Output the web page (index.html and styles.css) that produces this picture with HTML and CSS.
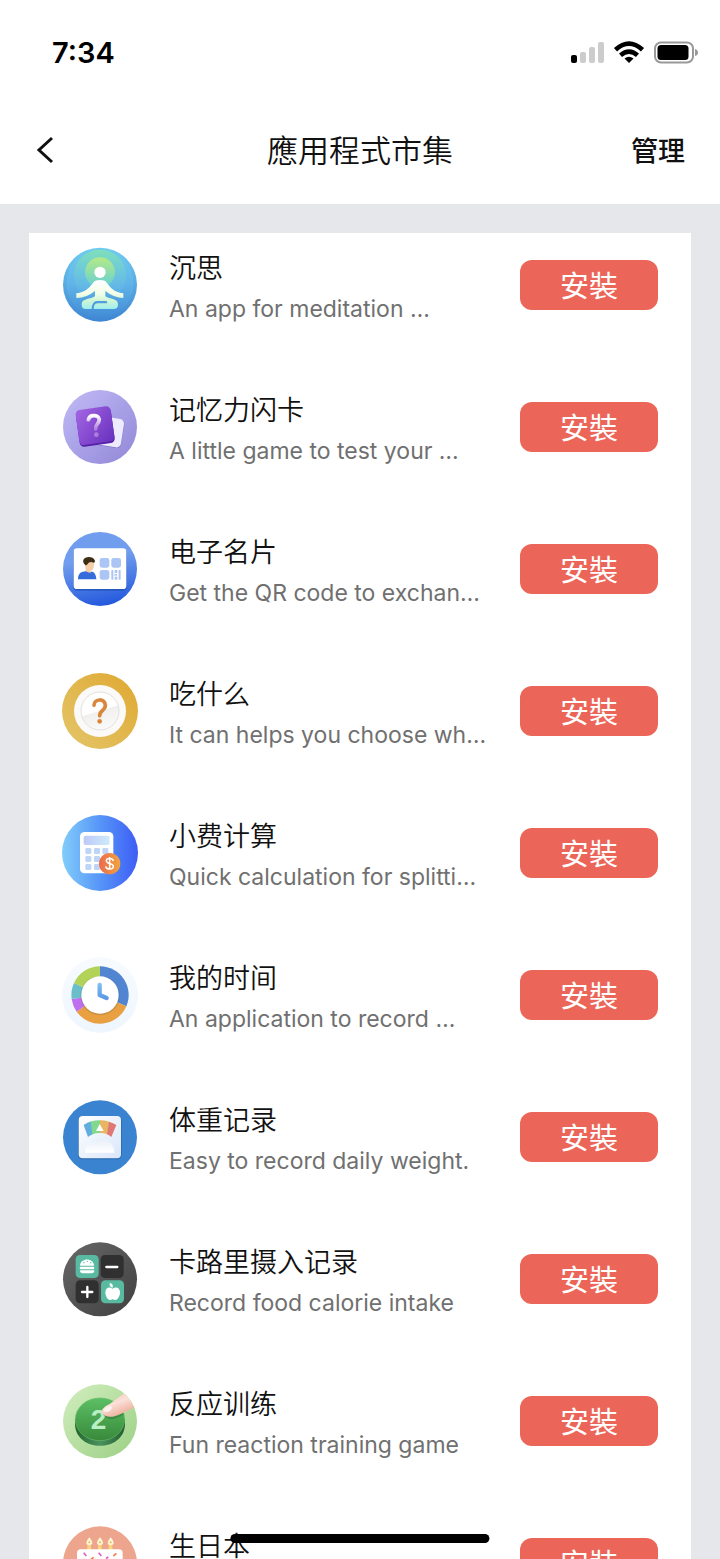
FILE: index.html
```html
<!DOCTYPE html>
<html lang="zh-Hant">
<head>
<meta charset="utf-8">
<meta name="viewport" content="width=device-width, initial-scale=1">
<title>應用程式市集</title>
<link rel="stylesheet" href="styles.css">
</head>
<body>
<div class="screen">
  <div class="status">
    <span class="time">7:34</span>
    <svg class="status-icons" width="128" height="24" viewBox="0 0 128 24" aria-hidden="true">
      <rect x="1" y="15" width="6" height="8" rx="2"/>
      <g fill="#ccc"><rect x="10" y="12" width="6" height="11" rx="2"/><rect x="19" y="7" width="6" height="16" rx="2"/><rect x="28" y="2" width="6" height="21" rx="2"/></g>
      <g fill="none" stroke="#000" stroke-width="4.600"><path d="M45.500 9.800Q59 -2.500 72.500 9.800"/><path d="M50.500 15.300Q59 8 67.500 15.300"/></g>
      <path d="M54.500 18.500Q59 15 63.500 18.500L59 23Z"/>
      <rect x="85" y="2.500" width="38" height="20" rx="6" fill="none" stroke="#999" stroke-width="2"/>
      <rect x="87.500" y="5" width="31" height="15" rx="3.500"/>
      <path d="M125 9Q128 10 128 12.500Q128 15 125 16Z" fill="#999"/>
    </svg>
  </div>
  <header class="navbar">
    <button class="back" type="button" aria-label="返回"><svg width="20" height="28" viewBox="0 0 20 28" aria-hidden="true"><path d="M17 2L4 14L17 26" fill="none" stroke="#111" stroke-width="3"/></svg></button>
    <h1 class="heading">應用程式市集</h1>
    <button class="manage" type="button">管理</button>
  </header>
  <main class="content">
    <ul class="apps">
      <li class="app">
        <svg class="icon" viewBox="36 36 228 228" aria-hidden="true">
          <defs>
            <linearGradient id="m1" x2="0" y2="1"><stop stop-color="#6fcdf0"/><stop offset="1" stop-color="#3f86d3"/></linearGradient>
            <linearGradient id="m0" x2="0" y2="1"><stop stop-color="#72cdf0"/><stop offset=".5" stop-color="#60b4e8"/><stop offset="1" stop-color="#438cd6"/></linearGradient>
            <linearGradient id="m2" x2="0" y2="1"><stop stop-color="#7fe0b8"/><stop offset=".75" stop-color="#64bfe6" stop-opacity=".4"/><stop offset="1" stop-color="#5aaee4" stop-opacity="0"/></linearGradient>
            <linearGradient id="m3" x2="0" y2="1"><stop stop-color="#b5ea86"/><stop offset="1" stop-color="#64cfd5"/></linearGradient>
            <linearGradient id="m4" gradientUnits="userSpaceOnUse" x1="0" y1="138" x2="0" y2="222"><stop stop-color="#fff"/><stop offset=".45" stop-color="#f3fde6"/><stop offset=".7" stop-color="#cff6d5"/><stop offset="1" stop-color="#9eeeee"/></linearGradient>
          </defs>
          <circle cx="150" cy="149" r="111" fill="url(#m1)"/>
          <circle cx="150" cy="146" r="101" fill="url(#m0)"/>
          <circle cx="150" cy="122" r="78" fill="url(#m2)"/>
          <circle cx="150" cy="112" r="45" fill="url(#m3)"/>
          <circle cx="150" cy="112" r="17" fill="#fff"/>
          <path d="M134 138Q150 132 166 138C183 159 190 171 220 175V189Q193 189 166 168V184C185 195 204 190 204 209Q204 222 190 222H131Q131 206 142 205H171Q173 201 169 198H141Q126 199 125 222H107Q95 222 95 209C95 190 116 195 135 184V168Q107 190 79 189V175C109 171 116 159 134 138Z" fill="url(#m4)"/>
        </svg>
        <div class="info"><h2 class="name" lang="zh-Hans">沉思</h2><p class="desc" lang="en">An app for meditation …</p></div>
        <button class="install" type="button">安裝</button>
      </li>
      <li class="app">
        <svg class="icon" viewBox="36 462 228 228" aria-hidden="true">
          <defs>
            <linearGradient id="f1" x2="1" y2="1"><stop stop-color="#c1bbf6"/><stop offset="1" stop-color="#9187d8"/></linearGradient>
            <linearGradient id="f2" x2="1" y2="1"><stop stop-color="#a465e3"/><stop offset="1" stop-color="#6730bd"/></linearGradient>
            <linearGradient id="f3" x2="0" y2="1"><stop stop-color="#fff"/><stop offset="1" stop-color="#ae80dc"/></linearGradient>
          </defs>
          <circle cx="150" cy="576" r="111" fill="url(#f1)"/>
          <rect x="133" y="549" width="86" height="86" rx="14" fill="#8073c4" transform="rotate(9 176 592)"/>
          <rect x="132" y="547" width="86" height="86" rx="14" fill="#eeebff" transform="rotate(9 175 590)"/>
          <rect x="83" y="524" width="106" height="106" rx="13" fill="#5521a5" transform="rotate(-8 136 577)"/>
          <rect x="82" y="519" width="106" height="106" rx="13" fill="url(#f2)" transform="rotate(-8 135 572)"/>
          <path d="M115 554Q119 540 134 542Q150 544 147 558C145 568 135 569 137 582" fill="none" stroke="url(#f3)" stroke-width="11" stroke-linecap="round"/>
          <circle cx="139" cy="599" r="7" fill="#a980dc"/>
        </svg>
        <div class="info"><h2 class="name" lang="zh-Hans">记忆力闪卡</h2><p class="desc" lang="en">A little game to test your …</p></div>
        <button class="install" type="button">安裝</button>
      </li>
      <li class="app">
        <svg class="icon" viewBox="36 33 228 228" aria-hidden="true">
          <defs><linearGradient id="c1" x1=".4" x2=".6" y2="1"><stop offset=".35" stop-color="#709ded"/><stop offset="1" stop-color="#2257dc"/></linearGradient></defs>
          <circle cx="150" cy="147" r="111" fill="url(#c1)"/>
          <rect x="70" y="88" width="160" height="124" rx="11" fill="#1d4fae" opacity=".65"/>
          <rect x="71" y="85" width="158" height="122" rx="10" fill="#fff"/>
          <path d="M84 178C84 159 94 155 108 154L128 155Q138 160 139 178Z" fill="#346cdc"/>
          <path d="M104 128L131 120Q136 153 119 154L108 153Z" fill="#f5cea8"/>
          <path d="M105 151Q110 150 112 144L125 155Q118 163 105 151Z" fill="#f5cea8"/>
          <path d="M100 120C103 109 129 107 134 120Q137 128 130 128Q124 124 116 128Q108 139 106 135Q98 129 100 120Z" fill="#3e2e13"/>
          <g fill="#abc5f4"><rect x="149" y="114" width="29" height="29" rx="7"/><rect x="184" y="114" width="29" height="29" rx="7"/><rect x="149" y="150" width="29" height="29" rx="7"/><rect x="184" y="150" width="6" height="29" rx="2"/><rect x="206" y="150" width="6" height="29" rx="2"/><rect x="194" y="150" width="8" height="9"/><rect x="194" y="170" width="8" height="9"/><rect x="193" y="162" width="8" height="5"/></g>
        </svg>
        <div class="info"><h2 class="name" lang="zh-Hans">电子名片</h2><p class="desc" lang="en">Get the QR code to exchan…</p></div>
        <button class="install" type="button">安裝</button>
      </li>
      <li class="app">
        <svg class="icon" viewBox="36 459 228 228" aria-hidden="true">
          <defs>
            <linearGradient id="e1" x1="1" x2="0" y2="1"><stop stop-color="#dfa831"/><stop offset="1" stop-color="#e4c66a"/></linearGradient>
            <linearGradient id="e2" x1=".3" x2=".6" y2="1"><stop offset=".5" stop-color="#fff"/><stop offset=".52" stop-color="#f1f0ee"/><stop offset="1" stop-color="#fafafa"/></linearGradient>
          </defs>
          <circle cx="150" cy="573" r="114" fill="url(#e1)"/>
          <circle cx="150" cy="573" r="78" fill="#fbfaf8"/>
          <circle cx="150" cy="573" r="57" fill="url(#e2)" stroke="#e3e1dd" stroke-width="3"/>
          <path d="M132 556C132 535 166 534 166 556C166 573 149 570 149 587" fill="none" stroke="#d9873d" stroke-width="11" stroke-linecap="round"/>
          <circle cx="149" cy="604" r="7" fill="#d9873d"/>
        </svg>
        <div class="info"><h2 class="name" lang="zh-Hans">吃什么</h2><p class="desc" lang="en">It can helps you choose wh…</p></div>
        <button class="install" type="button">安裝</button>
      </li>
      <li class="app">
        <svg class="icon" viewBox="36 30 228 228" aria-hidden="true">
          <defs>
            <linearGradient id="t1"><stop stop-color="#82cdfa"/><stop offset=".5" stop-color="#5795f8"/><stop offset="1" stop-color="#3d5df5"/></linearGradient>
            <linearGradient id="t2"><stop stop-color="#bdc9f8"/><stop offset="1" stop-color="#cfeafb"/></linearGradient>
            <linearGradient id="t3"><stop stop-color="#ec6a4f"/><stop offset="1" stop-color="#f2a43c"/></linearGradient>
          </defs>
          <circle cx="150" cy="144" r="114" fill="url(#t1)"/>
          <rect x="90" y="81" width="100" height="124" rx="13" fill="#fff"/>
          <rect x="101" y="92" width="78" height="28" rx="6" fill="url(#t2)"/>
          <g fill="#bed5f8"><rect x="106" y="129" width="18" height="18" rx="4"/><rect x="132" y="129" width="18" height="18" rx="4"/><rect x="157" y="129" width="18" height="18" rx="4"/><rect x="106" y="153" width="18" height="18" rx="4"/><rect x="132" y="153" width="18" height="18" rx="4"/><rect x="106" y="177" width="18" height="18" rx="4"/><rect x="132" y="177" width="18" height="18" rx="4"/></g>
          <circle cx="179" cy="176" r="32" fill="url(#t3)"/>
          <path d="M190 168C188 158 169 158 169 167C169 178 190 173 190 184C190 195 169 195 167 184M179 156V194" fill="none" stroke="#fff" stroke-width="4.500"/>
        </svg>
        <div class="info"><h2 class="name" lang="zh-Hans">小费计算</h2><p class="desc" lang="en">Quick calculation for splitti…</p></div>
        <button class="install" type="button">安裝</button>
      </li>
      <li class="app">
        <svg class="icon" viewBox="36 456 228 228" aria-hidden="true">
          <defs>
            <linearGradient id="w1" x2="0" y2="1"><stop stop-color="#f7fbff"/><stop offset="1" stop-color="#eef6fe"/></linearGradient>
            <linearGradient id="w2" gradientUnits="userSpaceOnUse" x1="0" y1="535" x2="0" y2="585"><stop stop-color="#83bff1"/><stop offset="1" stop-color="#5795e4"/></linearGradient>
          </defs>
          <circle cx="150" cy="570" r="114" fill="url(#w1)"/>
          <path d="M150 570V484A86 86 0 0 1 229 604Z" fill="#5285d1"/>
          <path d="M150 570L229 604A86 86 0 0 1 80 620Z" fill="#e8a042"/>
          <path d="M150 570L80 620A86 86 0 0 1 65 582Z" fill="#bf70ef"/>
          <path d="M150 570L65 582A86 86 0 0 1 72 534Z" fill="#69bec9"/>
          <path d="M150 570L72 534A86 86 0 0 1 150 484Z" fill="#b3d258"/>
          <circle cx="150" cy="572" r="59" fill="#4a4a40" opacity=".18"/>
          <circle cx="150" cy="570" r="56" fill="#fff"/>
          <path d="M149 540V570L170 579" fill="none" stroke="url(#w2)" stroke-width="13" stroke-linecap="round" stroke-linejoin="round"/>
        </svg>
        <div class="info"><h2 class="name" lang="zh-Hans">我的时间</h2><p class="desc" lang="en">An application to record …</p></div>
        <button class="install" type="button">安裝</button>
      </li>
      <li class="app">
        <svg class="icon" viewBox="36 27 228 228" aria-hidden="true">
          <defs>
            <linearGradient id="s1" x2="1" y2="1"><stop stop-color="#fff"/><stop offset="1" stop-color="#d9e6fa"/></linearGradient>
            <linearGradient id="s2" x2="0" y2="1"><stop stop-color="#e8effa"/><stop offset="1" stop-color="#fff"/></linearGradient>
          </defs>
          <circle cx="150" cy="142" r="111" fill="#3983d0"/>
          <rect x="84" y="79" width="131" height="129" rx="13" fill="#2766aa"/>
          <rect x="86" y="78" width="127" height="127" rx="12" fill="url(#s1)"/>
          <path d="M101 105Q112 97 125 94L130 132Q119 136 114 141Z" fill="#61addd"/>
          <path d="M122 95Q136 91 150 91V129Q137 129 127 133Z" fill="#80d98c"/>
          <path d="M150 91Q164 91 178 95L172 133Q162 129 150 129Z" fill="#e8b562"/>
          <path d="M177 95Q190 99 199 105L184 141Q179 136 171 133Z" fill="#df7775"/>
          <path d="M149 102L161 123H138Z" fill="#fff"/>
          <path d="M105 188C102 132 195 132 193 188Z" fill="url(#s2)"/>
        </svg>
        <div class="info"><h2 class="name" lang="zh-Hans">体重记录</h2><p class="desc" lang="en">Easy to record daily weight.</p></div>
        <button class="install" type="button">安裝</button>
      </li>
      <li class="app">
        <svg class="icon" viewBox="36 453 228 228" aria-hidden="true">
          <defs><linearGradient id="k1" x2="1" y2="1"><stop stop-color="#676767"/><stop offset="1" stop-color="#404040"/></linearGradient></defs>
          <circle cx="150" cy="568" r="111" fill="url(#k1)"/>
          <rect x="77" y="495" width="69" height="69" rx="13" fill="#58baa0"/><rect x="152" y="495" width="69" height="69" rx="13" fill="#303030"/>
          <rect x="77" y="571" width="69" height="69" rx="13" fill="#303030"/><rect x="153" y="571" width="69" height="69" rx="13" fill="#58baa0"/>
          <path d="M90 527C91 502 131 502 132 527Z" fill="#fff"/>
          <g fill="#fff"><rect x="89" y="530" width="44" height="8" rx="4"/><path d="M90 541H133Q133 550 125 550H98Q90 550 90 541Z"/></g>
          <g fill="#58baa0"><circle cx="102" cy="518" r="2"/><circle cx="112" cy="514" r="2"/><circle cx="122" cy="518" r="2"/></g>
          <path d="M169 531H202M96 606H127M112 591V621" fill="none" stroke="#fff" stroke-width="7" stroke-linecap="round"/>
          <path d="M188 596C196 589 210 591 210 607C210 620 201 633 193 629Q188 627 183 629C175 633 166 620 166 607C166 591 180 589 188 596ZM188 593C180 592 178 586 179 579C187 580 190 586 188 593Z" fill="#fff"/>
        </svg>
        <div class="info"><h2 class="name" lang="zh-Hans">卡路里摄入记录</h2><p class="desc" lang="en">Record food calorie intake</p></div>
        <button class="install" type="button">安裝</button>
      </li>
      <li class="app">
        <svg class="icon" viewBox="36 24 228 228" aria-hidden="true">
          <defs>
            <linearGradient id="r1" x2="1" y2="1"><stop stop-color="#d2eebf"/><stop offset="1" stop-color="#9bd084"/></linearGradient>
            <linearGradient id="r2" x2="0" y2="1"><stop stop-color="#5cbf65"/><stop offset="1" stop-color="#38893a"/></linearGradient>
            <linearGradient id="r3"><stop stop-color="#22662e"/><stop offset=".5" stop-color="#4b9260"/><stop offset="1" stop-color="#245f2e"/></linearGradient>
            <linearGradient id="r4" x2=".6" y2="1"><stop stop-color="#f5c4b5"/><stop offset=".5" stop-color="#fbe0d7"/><stop offset="1" stop-color="#eaa593"/></linearGradient>
            <clipPath id="r5"><circle cx="150" cy="139" r="111"/></clipPath>
          </defs>
          <circle cx="150" cy="139" r="111" fill="url(#r1)"/>
          <path d="M75 133V148C77 234 223 234 225 148V133Z" fill="url(#r3)"/>
          <ellipse cx="150" cy="133" rx="74" ry="64" fill="url(#r2)" stroke="#67bd68" stroke-width="2"/>
          <text class="digit" x="122" y="162">2</text>
          <path d="M158 118Q180 147 222 118L217 109Z" fill="#266f34" opacity=".45"/>
          <g clip-path="url(#r5)"><path d="M155 109C157 99 169 91 180 86L229 50L268 90L214 116C196 124 179 129 166 122Q154 117 155 109Z" fill="url(#r4)"/><path d="M160 107Q167 94 183 91Q189 101 180 107Q167 115 160 107Z" fill="#fff2ee"/></g>
        </svg>
        <div class="info"><h2 class="name" lang="zh-Hans">反应训练</h2><p class="desc" lang="en">Fun reaction training game</p></div>
        <button class="install" type="button">安裝</button>
      </li>
      <li class="app">
        <svg class="icon" viewBox="36 450 228 228" aria-hidden="true">
          <circle cx="150" cy="565" r="111" fill="#eda58d"/>
          <g fill="#f7d67c"><rect x="112" y="504" width="11" height="24"/><rect x="144" y="504" width="11" height="24"/><rect x="176" y="504" width="11" height="24"/></g>
          <g fill="#fff6d8"><path d="M118 487Q136 510 118 510Q100 510 118 487Z"/><path d="M150 487Q168 510 150 510Q132 510 150 487Z"/><path d="M182 487Q200 510 182 510Q164 510 182 487Z"/></g>
          <g fill="#efb641"><circle cx="118" cy="502" r="3"/><circle cx="150" cy="502" r="3"/><circle cx="182" cy="502" r="3"/></g>
          <rect x="81" y="523" width="137" height="100" rx="12" fill="#fff"/>
          <g stroke-width="5" fill="none"><path d="M101 533L109 543M146 533L154 543M168 551L175 546" stroke="#e35bc5"/><path d="M123 553L131 547M190 543L199 535" stroke="#ed783b"/></g>
        </svg>
        <div class="info"><h2 class="name" lang="zh-Hans">生日本</h2><p class="desc"></p></div>
        <button class="install" type="button">安裝</button>
      </li>
    </ul>
  </main>
  <div class="home-bar"></div>
</div>
</body>
</html>
```
FILE: styles.css
```css
* { box-sizing: border-box; }
body {
  margin: 0;
  background: #fff;
  color: #111;
  font-family: Inter, "Noto Sans CJK TC", sans-serif;
}
h1, h2, p, ul { margin: 0; padding: 0; font-weight: inherit; }
button { border: 0; padding: 0; background: none; color: inherit; font: inherit; cursor: pointer; }
.screen {
  position: relative;
  height: 100vh;
  overflow: hidden;
  display: flex;
  flex-direction: column;
}
.status {
  flex: none;
  height: 104px;
  padding: 0 22px 0 52px;
  display: flex;
  align-items: center;
  justify-content: space-between;
}
.time { font-size: 29px; font-weight: 600; color: #000; }
.navbar {
  flex: none;
  height: 100px;
  padding: 0 35px 8px;
  display: grid;
  grid-template-columns: 1fr auto 1fr;
  align-items: center;
}
.back { justify-self: start; display: flex; }
.heading { font-size: 31px; font-weight: 350; line-height: 44px; padding-bottom: 2px; font-family: "Noto Sans CJK TC", sans-serif; }
.manage { justify-self: end; font-size: 27px; font-weight: 500; line-height: 40px; padding-top: 3px; }
.content { flex: none; background: #e5e7eb; padding: 29px 29px 0; }
.apps {
  list-style: none;
  background: #fff;
  padding: 14px 33px 66px;
  display: grid;
  gap: 66px;
}
.app { display: flex; align-items: center; height: 76px; }
.icon { flex: none; width: 76px; height: 76px; }
.info { flex: 1; min-width: 0; padding: 6px 0 0 31px; }
.name { margin-bottom: 2px; font-family: "Noto Sans CJK SC", sans-serif; font-size: 27px; font-weight: 350; line-height: 40px; white-space: nowrap; }
.desc { min-height: 40px; font-size: 23px; font-weight: 400; line-height: 40px; color: #707070; white-space: nowrap; }
.install {
  flex: none;
  width: 138px;
  height: 50px;
  padding-top: 3px;
  border-radius: 12px;
  background: #ec6559;
  color: #fff;
  font-size: 29px;
  font-weight: 400;
  line-height: 47px;
}
.digit { font-family: "Liberation Sans", Arial, sans-serif; font-size: 84px; font-weight: 700; fill: #b9efc4; }
.home-bar {
  position: absolute;
  left: 50%;
  bottom: 16px;
  width: 36%;
  height: 9px;
  border-radius: 5px;
  background: #000;
  transform: translateX(-50%);
}
```
